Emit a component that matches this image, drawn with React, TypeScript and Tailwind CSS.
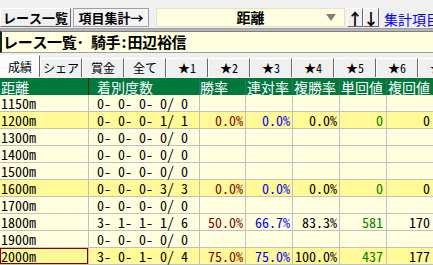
import React from "react";

// Windows-like "race list / aggregate" screen
const FONT = '"Noto Sans Mono CJK JP","Noto Sans CJK JP","Liberation Mono",monospace';

interface Row {
  dist: string;
  record: string;
  win?: string;
  ren?: string;
  fuku?: string;
  tan?: string;
  fkv?: string;
  hi?: boolean;
  sel?: boolean;
}

const rows: Row[] = [
  { dist: "1150m", record: "0- 0- 0- 0/ 0" },
  { dist: "1200m", record: "0- 0- 0- 1/ 1", win: "0.0%", ren: "0.0%", fuku: "0.0%", tan: "0", fkv: "0", hi: true },
  { dist: "1300m", record: "0- 0- 0- 0/ 0" },
  { dist: "1400m", record: "0- 0- 0- 0/ 0" },
  { dist: "1500m", record: "0- 0- 0- 0/ 0" },
  { dist: "1600m", record: "0- 0- 0- 3/ 3", win: "0.0%", ren: "0.0%", fuku: "0.0%", tan: "0", fkv: "0", hi: true },
  { dist: "1700m", record: "0- 0- 0- 0/ 0" },
  { dist: "1800m", record: "3- 1- 1- 1/ 6", win: "50.0%", ren: "66.7%", fuku: "83.3%", tan: "581", fkv: "170" },
  { dist: "1900m", record: "0- 0- 0- 0/ 0" },
  { dist: "2000m", record: "3- 0- 1- 0/ 4", win: "75.0%", ren: "75.0%", fuku: "100.0%", tan: "437", fkv: "177", hi: true, sel: true },
];

const tabs = ["シェア", "賞金", "全て", "★1", "★2", "★3", "★4", "★5", "★6", "★7"];

function RaisedButton({ className, children }: { className?: string; children: React.ReactNode }) {
  return (
    <div
      className={
        "h-[19px] shrink-0 flex items-center justify-center bg-[#f0f0f0] border border-t-white border-l-white border-r-[#696969] border-b-[#696969] " +
        (className ?? "")
      }
    >
      {children}
    </div>
  );
}

export default function App() {
  return (
    <div className="w-[433px] h-[265px] overflow-hidden bg-[#f0f0f0] text-black" style={{ fontFamily: FONT }}>
      {/* toolbar */}
      <div className="h-[28px] pt-[8px] flex items-start whitespace-nowrap">
        <RaisedButton className="w-[71px] font-bold text-[13px]">レース一覧</RaisedButton>
        <div className="ml-[2px] w-[76px] h-[19px] shrink-0 flex items-center justify-center bg-[#f4f4f4] border border-[#a0a0a0] font-bold text-[13px]">
          項目集計→
        </div>
        <div className="ml-[7px] w-[189px] h-[19px] shrink-0 relative flex items-center justify-center bg-[#ffffe0] border border-[#e3e3c8]">
          <span className="font-bold text-[14px]">距離</span>
          <svg className="absolute right-[8px] top-[5px]" width="10" height="7" viewBox="0 0 10 7">
            <polygon points="0,0 10,0 5,7" fill="#808080" />
          </svg>
        </div>
        <RaisedButton className="ml-[2px] w-[16px] font-bold text-[16px]">↑</RaisedButton>
        <RaisedButton className="w-[16px] font-bold text-[16px]">↓</RaisedButton>
        <span className="ml-[5px] mt-[1px] text-[14px] text-[#0000ff]">集計項目...</span>
      </div>

      {/* separator */}
      <div className="h-[3px] border-t border-[#a0a0a0] bg-[#b4b4b4]" />

      {/* title */}
      <div className="h-[22px] flex items-center bg-[#ffffe0] border-l-2 border-t border-l-[#202020] border-t-[#808080] border-b border-b-[#a0a0a0]">
        <span className="pl-[1px] font-bold text-[15px] whitespace-nowrap tracking-[-0.3px]">レース一覧･ 騎手:田辺裕信</span>
      </div>

      {/* tabs */}
      <div className="h-[25px] flex items-end border-b border-white whitespace-nowrap">
        <div className="w-[40px] shrink-0 h-[22px] flex items-center justify-center bg-[#fcfcfc] border-t border-l border-white border-r border-r-[#696969] text-[12px]">
          成績
        </div>
        {tabs.map((t) => (
          <div
            key={t}
            className="w-[42px] shrink-0 h-[19px] flex items-center justify-center bg-[#f0f0f0] border-t border-l border-white border-r border-r-[#696969] text-[12px]"
          >
            {t}
          </div>
        ))}
      </div>

      {/* header */}
      <div className="h-[17px] flex bg-[#00793d] text-white text-[14px] leading-none whitespace-nowrap">
        <div className="w-[89px] shrink-0 flex items-center pl-[1px] border-r border-[#0d2a18]">距離</div>
        <div className="w-[111px] shrink-0 flex items-center pl-[8px] border-r border-[#3f6f52]">着別度数</div>
        <div className="w-[46px] shrink-0 flex items-center border-r border-[#3f6f52]">勝率</div>
        <div className="w-[47px] shrink-0 flex items-center pl-[1px] border-r border-[#3f6f52]">連対率</div>
        <div className="w-[47px] shrink-0 flex items-center pl-[1px] border-r border-[#3f6f52]">複勝率</div>
        <div className="w-[47px] shrink-0 flex items-center pl-[1px] border-r border-[#3f6f52]">単回値</div>
        <div className="w-[47px] shrink-0 flex items-center pl-[1px] border-r border-[#3f6f52]">複回値</div>
      </div>

      {/* rows */}
      {rows.map((r) => (
        <div
          key={r.dist}
          className={
            "h-[17px] flex text-[14px] leading-none whitespace-pre border-b border-[#c0c0c0] " +
            (r.hi ? "bg-[#fffa96]" : "bg-[#ffffe0]")
          }
        >
          <div
            className={
              "w-[89px] shrink-0 flex items-center pl-[1px] border-r border-[#c0c0c0] " +
              (r.sel ? "shadow-[inset_0_0_0_1px_#800000]" : "")
            }
          >
            {r.dist}
          </div>
          <div className="w-[111px] shrink-0 flex items-center pl-[8px] border-r border-[#c0c0c0]">{r.record}</div>
          <div className="w-[46px] shrink-0 flex items-center justify-end pr-[2px] border-r border-[#c0c0c0] text-[#800000]">{r.win}</div>
          <div className="w-[47px] shrink-0 flex items-center justify-end pr-[2px] border-r border-[#c0c0c0] text-[#0000ff]">{r.ren}</div>
          <div className="w-[47px] shrink-0 flex items-center justify-end pr-[2px] border-r border-[#c0c0c0]">{r.fuku}</div>
          <div className="w-[47px] shrink-0 flex items-center justify-end pr-[3px] border-r border-[#c0c0c0] text-[#008000]">{r.tan}</div>
          <div className="w-[47px] shrink-0 flex items-center justify-end pr-[3px] border-r border-[#c0c0c0]">{r.fkv}</div>
        </div>
      ))}
    </div>
  );
}
